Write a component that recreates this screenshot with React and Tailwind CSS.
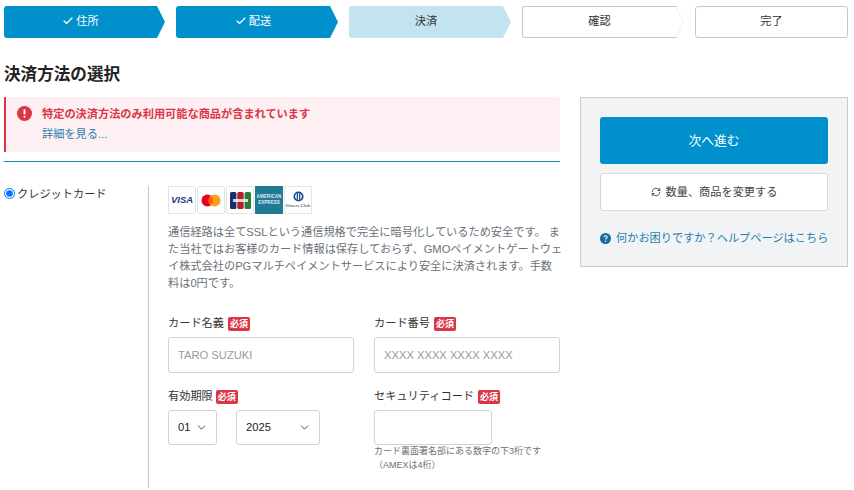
import React from "react";
import { Check, ChevronDown, RefreshCw } from "lucide-react";

const solidClip = "[clip-path:polygon(0_0,calc(100%-8px)_0,100%_50%,calc(100%-8px)_100%,0_100%)]";

function StepDone({ label, w }) {
  return (
    <div className={`${w} h-8 bg-[#0091cd] text-white rounded-l-[3px] ${solidClip} flex items-center justify-center gap-[2px] text-[11.2px] pr-[8px] pb-[2px]`}>
      <Check size={12} strokeWidth={2.4} />
      <span>{label}</span>
    </div>
  );
}

function StepTodo({ label, w, arrow }) {
  return (
    <div className={`relative ${w} h-8 flex items-center justify-center text-[11.2px] text-[#333] pb-[2px] ${arrow ? "pr-[7px]" : ""}`}>
      <div className={`absolute inset-y-0 left-0 ${arrow ? "right-[7px] border-r-0 rounded-r-none" : "right-0"} border border-[#c8c8c8] rounded-[3px] bg-white`} />
      {arrow && (
        <svg className="absolute right-0 top-0" width="8" height="32" viewBox="0 0 8 32" fill="none">
          <path d="M0 .5L7.5 16L0 31.5" stroke="#eeeeee" />
        </svg>
      )}
      <span className="relative">{label}</span>
    </div>
  );
}

function Badge() {
  return (
    <span className="inline-flex items-center justify-center w-[22px] h-[14px] bg-[#dc3545] rounded-[2px] text-white text-[9px] leading-none font-bold mt-[2px]">
      必須
    </span>
  );
}

function CardFrame({ children, className = "" }) {
  return (
    <div className={`w-[28px] h-[28px] border border-[#e3e3e3] rounded-[2px] bg-white flex items-center justify-center overflow-hidden ${className}`}>
      {children}
    </div>
  );
}

function Cards() {
  return (
    <div className="flex gap-px">
      <CardFrame>
        <span className="text-[#1a3a7c] text-[9.5px] font-bold italic leading-none">VISA</span>
      </CardFrame>
      <CardFrame>
        <svg width="20" height="13" viewBox="0 0 20 13">
          <circle cx="6.5" cy="6.5" r="6" fill="#eb001b" />
          <circle cx="13.5" cy="6.5" r="6" fill="#f79e1b" />
          <path d="M10 2a6 6 0 0 1 0 9a6 6 0 0 1 0-9z" fill="#ff5f00" />
        </svg>
      </CardFrame>
      <CardFrame>
        <svg width="21" height="17" viewBox="0 0 21 17">
          <rect x="0" y="0" width="6.4" height="17" rx="1.5" fill="#1b2f6e" />
          <rect x="7.3" y="0" width="6.4" height="17" rx="1.5" fill="#b3202c" />
          <rect x="14.6" y="0" width="6.4" height="17" rx="1.5" fill="#2a7a3c" />
          <rect x="3" y="7" width="15" height="3" fill="#fff" opacity=".8" />
        </svg>
      </CardFrame>
      <div className="w-[28px] h-[28px] bg-[#1f7a94] flex flex-col items-center justify-center text-[#dbe9ee] text-[4.6px] leading-[6px] font-bold overflow-hidden whitespace-nowrap">
        <span>AMERICAN</span>
        <span>EXPRESS</span>
      </div>
      <CardFrame className="flex-col">
        <svg width="11" height="11" viewBox="0 0 12 12">
          <circle cx="6" cy="6" r="5.5" fill="#1b4a93" />
          <circle cx="6" cy="6" r="3.6" fill="#fff" />
          <rect x="4" y="2.5" width="1.4" height="7" fill="#1b4a93" />
          <rect x="6.6" y="2.5" width="1.4" height="7" fill="#1b4a93" />
        </svg>
        <span className="text-[#333] text-[5px] leading-[6px] font-['Liberation_Serif',serif] whitespace-nowrap mt-px">Diners Club</span>
      </CardFrame>
    </div>
  );
}

function Field({ label, placeholder }) {
  return (
    <div className="w-[186px]">
      <div className="flex items-center gap-1 h-[18px] text-[11.2px] text-[#333]">
        <span>{label}</span>
        <Badge />
      </div>
      <input
        readOnly
        placeholder={placeholder}
        className="mt-[5px] block w-full h-9 px-[9px] border border-[#ced4da] rounded-[3px] bg-white text-[11.2px] placeholder:text-[#9a9a9a] outline-none"
      />
    </div>
  );
}

function FakeSelect({ value, w }) {
  return (
    <div className={`${w} h-[35px] border border-[#ced4da] rounded-[3px] bg-white flex items-center justify-between pl-[9px] pr-[8px] text-[11.2px] text-[#222]`}>
      <span>{value}</span>
      <ChevronDown size={13} strokeWidth={1.6} className="text-[#333]" />
    </div>
  );
}

export default function App() {
  return (
    <div className="w-[854px] h-[490px] overflow-hidden bg-white text-[#333] font-['Liberation_Sans','Noto_Sans_CJK_JP',sans-serif]">
      <div className="flex pl-1 pr-[6px] pt-[6px] gap-[11px]">
        <StepDone label="住所" w="w-[161px]" />
        <StepDone label="配送" w="w-[162px]" />
        <div className={`w-[162px] h-8 bg-[#c3e2f2] rounded-l-[3px] ${solidClip} flex items-center justify-center text-[11.2px] text-[#333] pr-[8px] pb-[2px]`}>決済</div>
        <StepTodo label="確認" w="w-[162px]" arrow />
        <StepTodo label="完了" w="w-[153px]" />
      </div>

      <h1 className="ml-1 mt-[25px] text-[16.6px] leading-[24px] font-bold text-[#222]">決済方法の選択</h1>

      <div className="flex pl-1 pr-[6px] mt-[10px] gap-5">
        <div className="w-[556px]">
          <div className="h-[55px] bg-[#fdeff2] border-l-2 border-[#dc3545] rounded-r-[2px] pl-[11px] flex">
            <svg className="mt-[9px] shrink-0" width="15" height="15" viewBox="0 0 15 15">
              <circle cx="7.5" cy="7.5" r="7.5" fill="#dc3545" />
              <rect x="6.5" y="3.2" width="2" height="5.4" rx=".8" fill="#fff" />
              <rect x="6.5" y="9.8" width="2" height="2" rx="1" fill="#fff" />
            </svg>
            <div className="ml-[10px] pt-[8px]">
              <div className="text-[11.2px] leading-[18px] font-bold text-[#dc3545]">特定の決済方法のみ利用可能な商品が含まれています</div>
              <div className="text-[11.2px] leading-[18px] mt-[2px] text-[#2a7fb0]">詳細を見る...</div>
            </div>
          </div>
          <div className="mt-[9px] h-px bg-[#1a86b4]" />

          <div className="flex mt-[24px]">
            <div className="w-[144px] flex items-start pt-px">
              <input type="radio" checked readOnly className="w-[11px] h-[11px] m-0 mt-px shrink-0" />
              <span className="ml-[2px] text-[11.2px] leading-[14px] text-[#333]">クレジットカード</span>
            </div>
            <div className="border-l border-[#c8c8c8] pl-[19px] w-[412px] h-[302px]">
              <Cards />
              <p className="mt-[10px] w-[396px] text-[11.2px] leading-[17px] text-[#6b7178]">
                通信経路は全てSSLという通信規格で完全に暗号化しているため安全です。 また当社ではお客様のカード情報は保存しておらず、GMOペイメントゲートウェイ株式会社のPGマルチペイメントサービスにより安全に決済されます。手数
                <br />
                料は0円です。
              </p>
              <div className="flex gap-5 mt-[22px]">
                <Field label="カード名義" placeholder="TARO SUZUKI" />
                <Field label="カード番号" placeholder="XXXX XXXX XXXX XXXX" />
              </div>
              <div className="flex gap-5 mt-[14px]">
                <div className="w-[186px]">
                  <div className="flex items-center gap-[3px] h-[18px] text-[11.2px] text-[#333]">
                    <span>有効期限</span>
                    <Badge />
                  </div>
                  <div className="mt-[5px] flex gap-[19px]">
                    <FakeSelect value="01" w="w-[49px]" />
                    <FakeSelect value="2025" w="w-[84px]" />
                  </div>
                </div>
                <div className="w-[186px]">
                  <div className="flex items-center gap-1 h-[18px] text-[11.2px] text-[#333]">
                    <span>セキュリティコード</span>
                    <Badge />
                  </div>
                  <div className="mt-[5px] w-[118px] h-[35px] border border-[#ced4da] rounded-[3px] bg-white" />
                  <p className="-mt-px text-[9px] leading-[14px] text-[#6b7178] whitespace-nowrap">
                    カード裏面署名部にある数字の下3桁です
                    <br />
                    （AMEXは4桁）
                  </p>
                </div>
              </div>
            </div>
          </div>
        </div>

        <div className="w-[268px] h-[170px] bg-[#f2f3f5] border border-[#c9cbce] px-[19px] pt-[19px]">
          <div className="h-[47px] bg-[#0091cd] rounded-[3px] text-white text-[12.8px] flex items-center justify-center">次へ進む</div>
          <div className="mt-[9px] h-[38px] bg-white border border-[#d5d7da] rounded-[3px] text-[11.2px] text-[#444] flex items-center justify-center gap-[5px]">
            <RefreshCw size={10} strokeWidth={2.2} className="shrink-0" />
            <span>数量、商品を変更する</span>
          </div>
          <div className="mt-[18px] flex items-center gap-[5px] text-[11.2px] leading-[18px] text-[#1f7fb0] whitespace-nowrap">
            <svg className="shrink-0" width="11" height="11" viewBox="0 0 11 11">
              <circle cx="5.5" cy="5.5" r="5.5" fill="#0f6fa5" />
              <path d="M3.9 4.2c.1-1 .8-1.5 1.7-1.5s1.6.6 1.6 1.4c0 1.2-1.5 1.2-1.5 2.4" fill="none" stroke="#fff" strokeWidth="1.1" />
              <circle cx="5.6" cy="8.3" r=".7" fill="#fff" />
            </svg>
            <span>何かお困りですか？ヘルプページはこちら</span>
          </div>
        </div>
      </div>
    </div>
  );
}
